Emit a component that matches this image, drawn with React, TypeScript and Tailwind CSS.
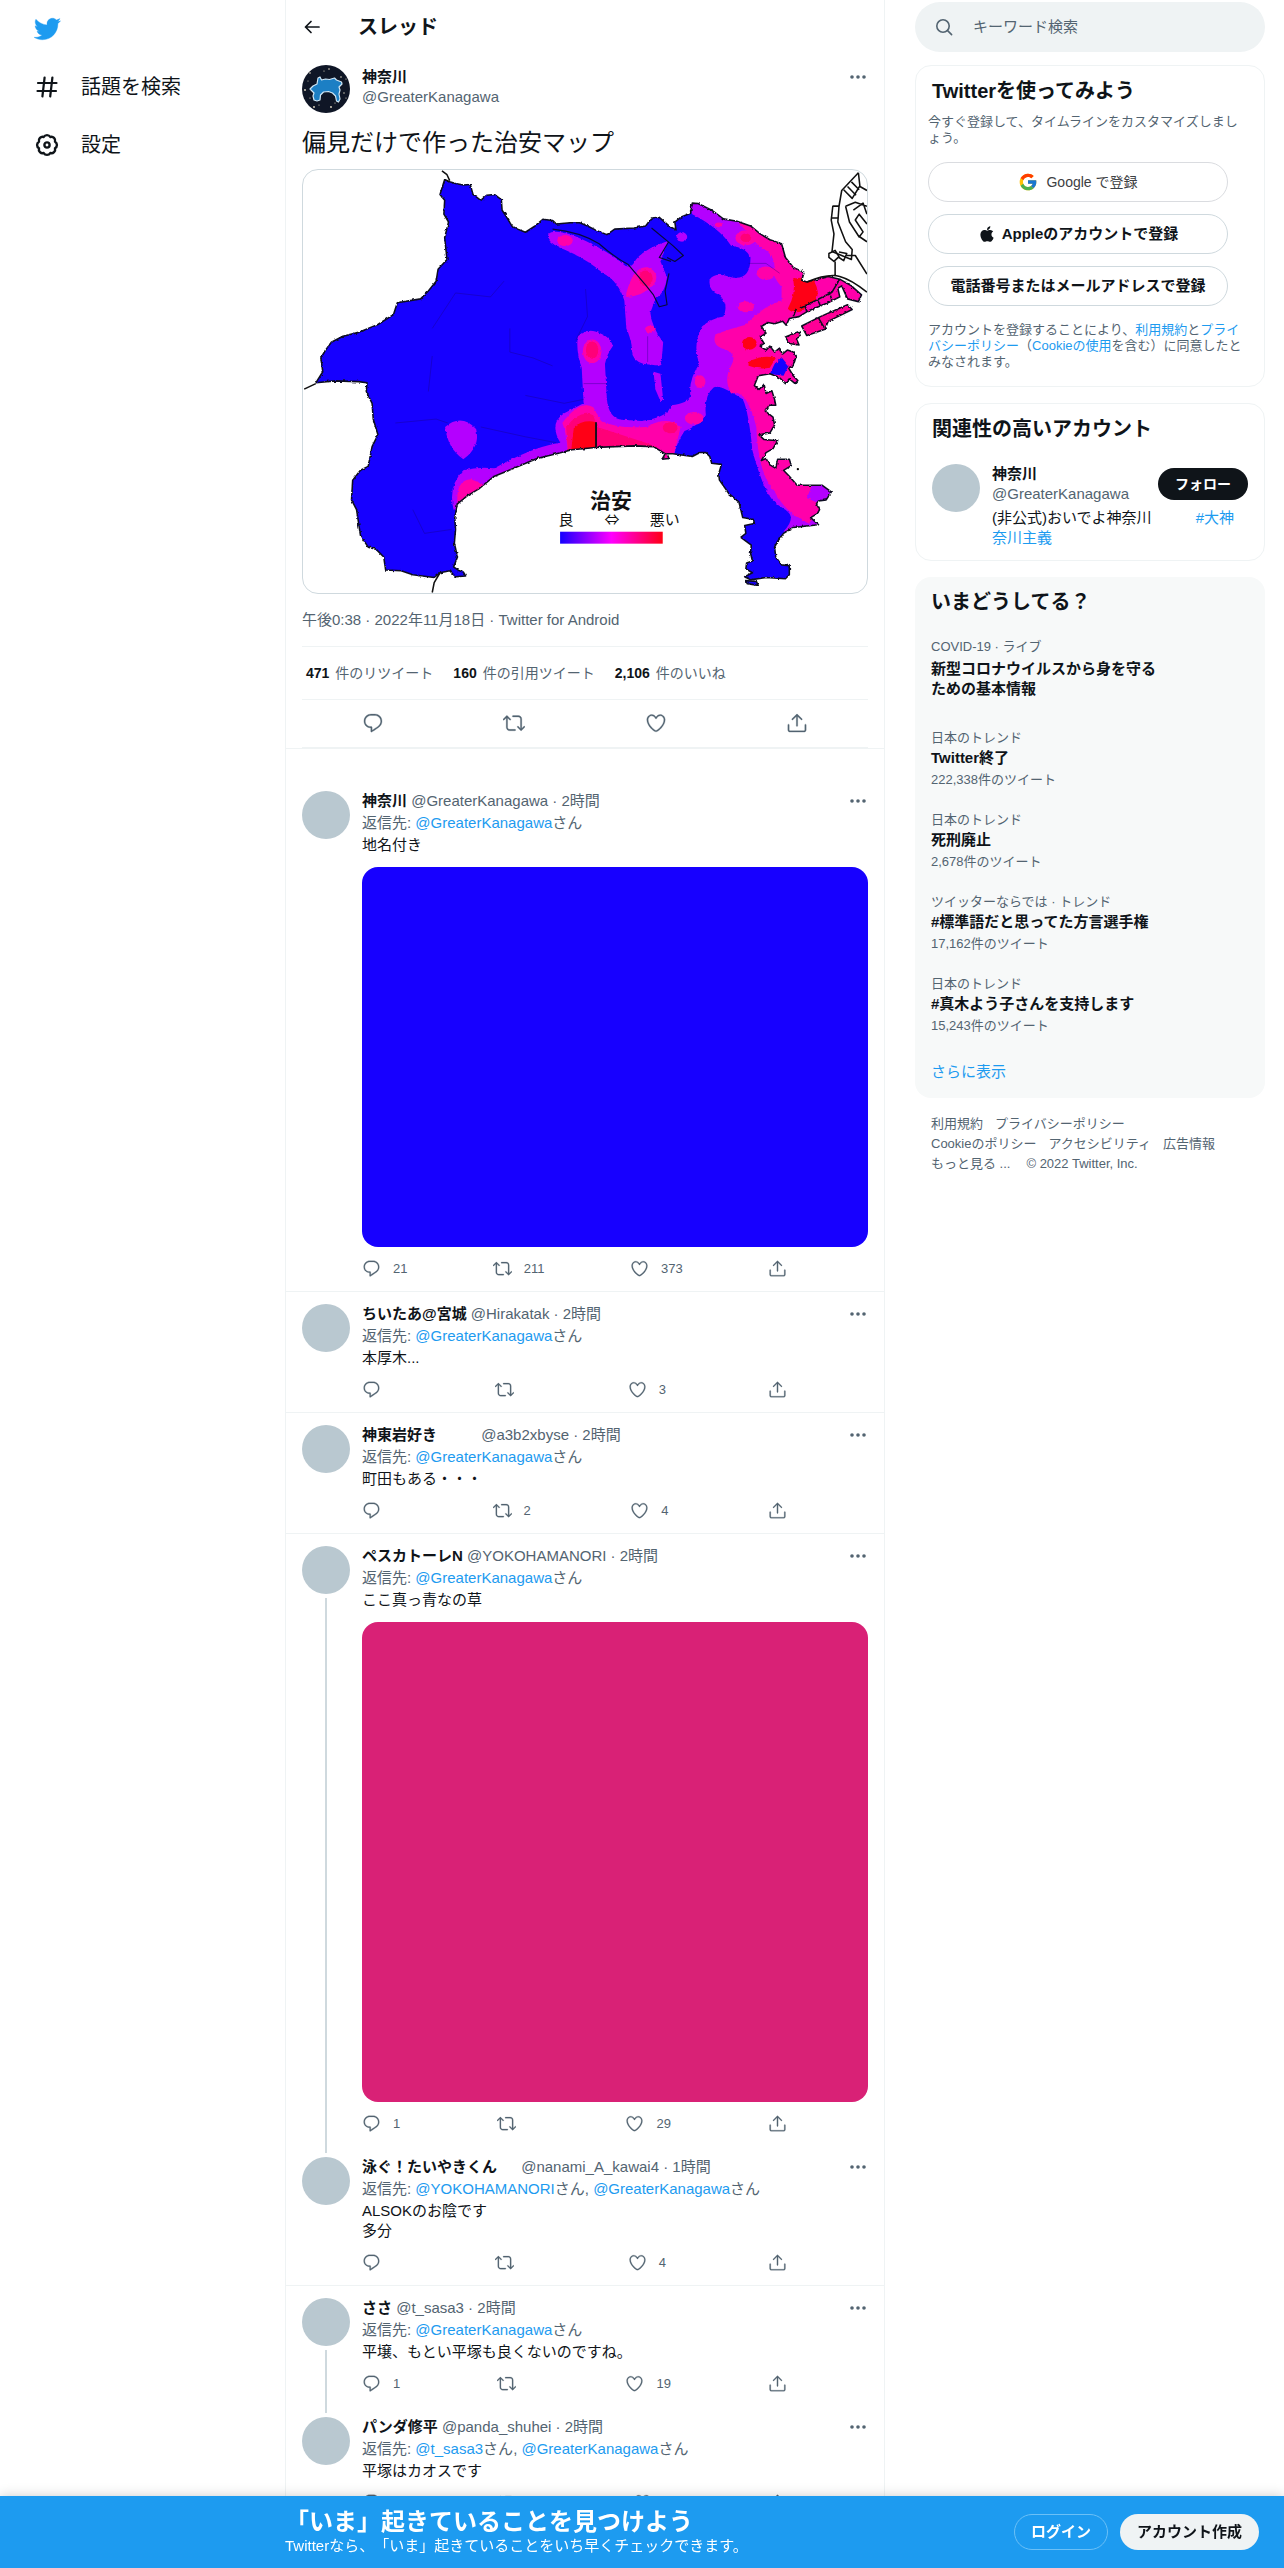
import type { ReactNode } from 'react';
import { FaApple } from 'react-icons/fa';
import { FcGoogle } from 'react-icons/fc';

type Tweet = {
  name: string;
  emoji?: number;
  handle: string;
  time: string;
  replyTo: string[];
  lines: string[];
  media?: 'blue' | 'pink';
  replies?: string;
  retweets?: string;
  likes?: string;
  linked?: boolean;
};

const tweets: Tweet[] = [
  {
    name: '神奈川',
    handle: '@GreaterKanagawa',
    time: '2時間',
    replyTo: ['@GreaterKanagawa'],
    lines: ['地名付き'],
    media: 'blue',
    replies: '21',
    retweets: '211',
    likes: '373',
  },
  {
    name: 'ちいたあ@宮城',
    handle: '@Hirakatak',
    time: '2時間',
    replyTo: ['@GreaterKanagawa'],
    lines: ['本厚木...'],
    likes: '3',
  },
  {
    name: '神東岩好き',
    emoji: 2,
    handle: '@a3b2xbyse',
    time: '2時間',
    replyTo: ['@GreaterKanagawa'],
    lines: ['町田もある・・・'],
    retweets: '2',
    likes: '4',
  },
  {
    name: 'ペスカトーレN',
    handle: '@YOKOHAMANORI',
    time: '2時間',
    replyTo: ['@GreaterKanagawa'],
    lines: ['ここ真っ青なの草'],
    media: 'pink',
    replies: '1',
    likes: '29',
    linked: true,
  },
  {
    name: '泳ぐ！たいやきくん',
    emoji: 1,
    handle: '@nanami_A_kawai4',
    time: '1時間',
    replyTo: ['@YOKOHAMANORI', '@GreaterKanagawa'],
    lines: ['ALSOKのお陰です', '多分'],
    likes: '4',
  },
  {
    name: 'ささ',
    handle: '@t_sasa3',
    time: '2時間',
    replyTo: ['@GreaterKanagawa'],
    lines: ['平壌、もとい平塚も良くないのですね。'],
    replies: '1',
    likes: '19',
    linked: true,
  },
  {
    name: 'パンダ修平',
    handle: '@panda_shuhei',
    time: '2時間',
    replyTo: ['@t_sasa3', '@GreaterKanagawa'],
    lines: ['平塚はカオスです'],
  },
];

const trends = [
  { label: '日本のトレンド', title: 'Twitter終了', count: '222,338件のツイート' },
  { label: '日本のトレンド', title: '死刑廃止', count: '2,678件のツイート' },
  { label: 'ツイッターならでは · トレンド', title: '#標準語だと思ってた方言選手権', count: '17,162件のツイート' },
  { label: '日本のトレンド', title: '#真木よう子さんを支持します', count: '15,243件のツイート' },
];

const paths = {
  bird: 'M23.643 4.937c-.835.37-1.732.62-2.675.733.962-.576 1.7-1.49 2.048-2.578-.9.534-1.897.922-2.958 1.13-.85-.904-2.06-1.47-3.4-1.47-2.572 0-4.658 2.086-4.658 4.66 0 .364.042.718.12 1.06-3.873-.195-7.304-2.05-9.602-4.868-.4.69-.63 1.49-.63 2.342 0 1.616.823 3.043 2.072 3.878-.764-.025-1.482-.234-2.11-.583v.06c0 2.257 1.605 4.14 3.737 4.568-.392.106-.803.162-1.227.162-.3 0-.593-.028-.877-.082.593 1.85 2.313 3.198 4.352 3.234-1.595 1.25-3.604 1.995-5.786 1.995-.376 0-.747-.022-1.112-.065 2.062 1.323 4.51 2.093 7.14 2.093 8.57 0 13.255-7.098 13.255-13.254 0-.2-.005-.402-.014-.602.91-.658 1.7-1.477 2.323-2.41z',
  reply: 'M14.046 2.242l-4.148-.01h-.002c-4.374 0-7.8 3.427-7.8 7.802 0 4.098 3.186 7.206 7.465 7.37v3.828c0 .108.044.286.12.403.142.225.384.347.632.347.138 0 .277-.038.402-.118.264-.168 6.473-4.14 8.088-5.506 1.902-1.61 3.04-3.97 3.043-6.312v-.017c-.006-4.367-3.43-7.787-7.8-7.788zm3.787 12.972c-1.134.96-4.862 3.405-6.772 4.643V16.67c0-.414-.335-.75-.75-.75h-.396c-3.66 0-6.318-2.476-6.318-5.886 0-3.534 2.768-6.302 6.3-6.302l4.147.01h.002c3.532 0 6.3 2.766 6.302 6.296-.003 1.91-.942 3.844-2.514 5.176z',
  retweet: 'M23.77 15.67c-.292-.293-.767-.293-1.06 0l-2.22 2.22V7.65c0-2.068-1.683-3.75-3.75-3.75h-5.85c-.414 0-.75.336-.75.75s.336.75.75.75h5.85c1.24 0 2.25 1.01 2.25 2.25v10.24l-2.22-2.22c-.293-.293-.768-.293-1.06 0s-.294.768 0 1.06l3.5 3.5c.145.147.337.22.53.22s.383-.072.53-.22l3.5-3.5c.294-.292.294-.767 0-1.06zm-10.66 3.28H7.26c-1.24 0-2.25-1.01-2.25-2.25V6.46l2.22 2.22c.148.147.34.22.532.22s.384-.073.53-.22c.293-.293.293-.768 0-1.06l-3.5-3.5c-.293-.294-.768-.294-1.06 0l-3.5 3.5c-.294.292-.294.767 0 1.06s.767.293 1.06 0l2.22-2.22V16.7c0 2.068 1.683 3.75 3.75 3.75h5.85c.414 0 .75-.336.75-.75s-.337-.75-.75-.75z',
  like: 'M12 21.638h-.014C9.403 21.59 1.95 14.856 1.95 8.478c0-3.064 2.525-5.754 5.403-5.754 2.29 0 3.83 1.58 4.646 2.73.814-1.148 2.354-2.73 4.645-2.73 2.88 0 5.404 2.69 5.404 5.755 0 6.376-7.454 13.11-10.037 13.157H12zM7.354 4.225c-2.08 0-3.903 1.988-3.903 4.255 0 5.74 7.034 11.596 8.55 11.658 1.518-.062 8.55-5.917 8.55-11.658 0-2.267-1.823-4.255-3.903-4.255-2.528 0-3.94 2.936-3.952 2.965-.23.562-1.156.562-1.387 0-.014-.03-1.425-2.965-3.954-2.965z',
  share: 'M17.53 7.47l-5-5c-.293-.293-.768-.293-1.06 0l-5 5c-.294.293-.294.768 0 1.06s.767.294 1.06 0l3.72-3.72V15c0 .414.336.75.75.75s.75-.336.75-.75V4.81l3.72 3.72c.146.147.338.22.53.22s.384-.072.53-.22c.293-.293.293-.767 0-1.06zM19.708 21.944H4.292C3.028 21.944 2 20.916 2 19.652V14c0-.414.336-.75.75-.75s.75.336.75.75v5.652c0 .437.355.792.792.792h15.416c.437 0 .792-.355.792-.792V14c0-.414.336-.75.75-.75s.75.336.75.75v5.652c0 1.264-1.028 2.292-2.292 2.292z',
};

function Icon({ name, className }: { name: keyof typeof paths; className: string }) {
  return (
    <svg
      viewBox="0 0 24 24"
      fill="currentColor"
      stroke="currentColor"
      strokeWidth="0.3"
      className={`shrink-0 ${className}`}
      aria-hidden="true"
    >
      <path d={paths[name]} />
    </svg>
  );
}

function MoreButton() {
  return (
    <button type="button" aria-label="もっと見る" className="text-[#536471]">
      <svg viewBox="0 0 20 20" fill="currentColor" className="size-5">
        <circle cx="4" cy="10" r="1.8" />
        <circle cx="10" cy="10" r="1.8" />
        <circle cx="16" cy="10" r="1.8" />
      </svg>
    </button>
  );
}

/* Blank slots that stand where emoji go */
function EmojiGap({ count }: { count: number }) {
  return (
    <>
      {Array.from({ length: count }, (_, i) => (
        <span key={i} className="inline-block w-5" />
      ))}
    </>
  );
}

function Link({ children }: { children: ReactNode }) {
  return (
    <a href="#" className="text-[#1d9bf0]">
      {children}
    </a>
  );
}

const LAND =
  'M412 452L425 458 440 462 460 466 478 465 485 490 505 505 520 492 540 490 558 503 560 530 572 548 585 570 600 578 620 586 645 570 665 553 690 556 700 565 735 562 760 562 780 570 800 580 830 592 850 578 900 575 930 570 945 550 965 548 990 570 1008 580 1005 560 1020 548 1045 538 1050 512 1065 513 1100 530 1130 552 1165 558 1200 570 1225 590 1250 605 1280 615 1290 650 1310 675 1338 688 1332 708 1345 712 1400 698 1430 705 1460 722 1486 745 1478 762 1450 755 1435 722 1425 728 1430 750 1400 765 1350 785 1325 800 1300 805 1292 822 1283 812 1262 818 1245 815 1228 825 1240 842 1225 852 1235 868 1225 875 1240 885 1250 875 1262 890 1275 880 1282 895 1295 885 1310 890 1318 900 1310 925 1298 930 1310 950 1322 962 1315 970 1300 958 1290 970 1275 955 1250 945 1220 950 1210 975 1222 985 1235 972 1240 995 1255 988 1262 1010 1265 1025 1248 1025 1238 1040 1258 1055 1262 1075 1250 1095 1222 1100 1235 1112 1270 1115 1258 1135 1240 1145 1228 1165 1240 1160 1248 1175 1265 1185 1270 1162 1300 1162 1305 1178 1285 1190 1300 1205 1320 1228 1385 1228 1408 1245 1395 1265 1375 1268 1370 1275 1378 1290 1372 1300 1355 1310 1375 1328 1310 1335 1285 1350 1270 1370 1262 1385 1265 1410 1280 1430 1300 1432 1300 1455 1290 1465 1240 1462 1200 1468 1185 1460 1205 1450 1188 1440 1190 1425 1205 1420 1200 1400 1202 1380 1175 1360 1188 1350 1185 1330 1210 1325 1208 1315 1180 1310 1170 1270 1145 1250 1120 1215 1118 1200 1125 1175 1100 1172 1095 1155 1085 1145 1070 1145 1050 1155 1000 1148 985 1148 990 1160 972 1162 980 1148 950 1130 900 1128 850 1130 800 1132 740 1138 700 1148 650 1160 590 1185 540 1205 500 1237 470 1255 445 1275 438 1310 440 1340 437 1375 445 1410 435 1435 450 1445 460 1448 466 1458 440 1460 425 1445 400 1450 385 1462 330 1455 300 1445 260 1443 255 1410 235 1390 215 1385 195 1355 185 1290 172 1265 175 1215 195 1190 215 1180 225 1130 240 1100 228 1060 225 1020 210 990 212 968 190 965 130 963 80 968 98 940 93 905 105 885 120 865 150 850 190 840 240 820 280 795 290 765 350 755 370 735 390 710 395 680 418 655 412 600 422 560 410 540 412 505 400 490Z';

function SafetyMap() {
  return (
    <svg viewBox="0 0 566 424" className="block w-full" role="img" aria-label="神奈川県の治安マップ">
      <defs>
        <clipPath id="land">
          <path d={LAND} />
        </clipPath>
        <filter id="coast" x="0" y="0" width="1" height="1">
          <feTurbulence type="fractalNoise" baseFrequency="0.12" numOctaves="2" seed="4" />
          <feDisplacementMap in="SourceGraphic" scale="7" xChannelSelector="R" yChannelSelector="G" />
        </filter>
        <linearGradient id="scale">
          <stop offset="0" stopColor="#1400ff" />
          <stop offset="0.5" stopColor="#ff00ff" />
          <stop offset="1" stopColor="#ff0014" />
        </linearGradient>
      </defs>
      <g transform="scale(.3895 .3955) translate(-47 -428)" strokeLinejoin="round">
        <g filter="url(#coast)">
          <path d={LAND} fill="#1400ff" />
          <g clipPath="url(#land)">
            <g fill="#b400ff">
              <path d="M680 590Q690 578 740 592Q830 630 870 665Q890 685 905 655Q930 625 988 608L968 660 985 700Q980 740 955 755L942 790Q945 825 975 865L970 925 925 920Q890 910 895 880Q890 850 880 830L875 760Q860 710 820 690Q780 655 720 630Q670 610 680 590Z" />
              <path d="M950 940L968 945 975 1010 968 1015 955 985Z" />
              <path d="M755 850Q780 830 800 838Q840 850 845 875Q830 895 825 920L830 1010Q835 1060 870 1062L920 1065Q990 1055 995 1025Q1040 1020 1045 1000Q1040 960 1068 920Q1050 870 1075 825Q1100 805 1130 800Q1145 770 1120 745Q1090 735 1095 705Q1110 685 1150 700Q1200 710 1200 650Q1190 625 1150 620Q1120 575 1050 540L1040 500 1500 490 1500 1350 1285 1345Q1320 1310 1290 1290Q1250 1270 1235 1230Q1215 1180 1205 1140Q1195 1040 1180 1010Q1120 970 1105 980Q1080 1000 1085 1050Q1060 1080 1030 1090Q1010 1120 1005 1145L960 1180 500 1300 435 1290Q420 1230 460 1190Q500 1180 540 1185Q640 1130 710 1120Q680 1070 720 1045L770 1020 765 930Q750 890 755 850Z" />
              <path d="M413 1080Q455 1045 493 1085Q505 1130 460 1162Q420 1135 413 1080Z" />
              <ellipse cx="1023" cy="598" rx="14" ry="12" />
            </g>
            <g fill="#ff00aa">
              <path d="M1150 545L1500 550 1500 1215 1360 1225 1345 1260 1390 1280 1350 1325Q1290 1300 1260 1240Q1220 1200 1215 1080Q1190 980 1150 995Q1130 960 1150 925Q1170 890 1125 880Q1100 870 1110 845Q1150 830 1190 820Q1220 780 1280 760V725Q1250 690 1262 680Q1265 640 1220 620Q1180 570 1150 545Z" />
              <ellipse cx="1188" cy="600" rx="27" ry="19" />
              <ellipse cx="1240" cy="690" rx="24" ry="17" />
              <ellipse cx="1188" cy="775" rx="21" ry="14" />
              <ellipse cx="1070" cy="965" rx="14" ry="16" />
              <ellipse cx="722" cy="607" rx="20" ry="14" />
              <path d="M880 740Q900 670 935 675Q970 690 950 720Q920 750 880 750Z" />
              <ellipse cx="942" cy="832" rx="14" ry="9" />
              <ellipse cx="792" cy="888" rx="24" ry="30" />
              <ellipse cx="1055" cy="1058" rx="24" ry="16" />
              <ellipse cx="1118" cy="567" rx="9" ry="6" />
              <path d="M715 1070Q760 1010 795 1030L815 1065Q860 1085 930 1080Q990 1050 1020 1080L1000 1160 730 1150Q725 1090 715 1070Z" />
              <path d="M445 1275Q440 1215 480 1213L510 1225 490 1260Z" />
            </g>
            <g fill="#ff0078">
              <ellipse cx="792" cy="885" rx="16" ry="22" />
              <ellipse cx="930" cy="703" rx="18" ry="20" />
              <ellipse cx="993" cy="1082" rx="19" ry="14" />
              <ellipse cx="1188" cy="600" rx="14" ry="11" />
              <path d="M725 1080Q760 1035 795 1050L805 1080Q900 1110 960 1130L950 1150 730 1150Z" />
            </g>
            <g fill="#ff0014">
              <path d="M745 1080Q770 1060 802 1068V1140H738Z" />
              <path d="M1310 705Q1340 695 1365 712Q1380 740 1368 758Q1345 770 1335 785Q1310 795 1296 780Q1318 740 1310 705Z" />
              <ellipse cx="1197" cy="868" rx="19" ry="16" />
              <path d="M1195 915Q1230 895 1265 905L1250 930Q1220 935 1195 925Z" />
            </g>
            <path d="M1262 920L1280 903 1298 925 1285 950 1250 945Z" fill="#1400ff" />
          </g>
          <path d={LAND} fill="none" stroke="#101020" strokeWidth="4" />
          <g fill="#ff0096" stroke="#101020" strokeWidth="4">
            <path d="M1332 824L1380 800 1450 770 1462 782 1400 812 1392 832 1345 848Z" />
            <path d="M1290 852L1325 838 1328 850 1318 856 1325 872 1300 868Z" />
            <path d="M1375 803L1390 828M1310 800L1318 780M1345 788L1340 770M1380 772L1372 756M1410 760L1404 740M1430 705L1410 738 1330 778" fill="none" />
          </g>
          <path d="M1187 1470L1215 1472 1220 1482 1192 1478Z" fill="#1400ff" stroke="#101020" strokeWidth="4" />
        </g>
        <g fill="none" stroke="#08083c" strokeWidth="3">
          <path d="M690 578Q760 585 810 615Q850 650 885 668L930 720 950 745 965 775 985 770 980 735 990 690M945 575L1000 620 1027 645 1005 660 985 650M988 612L965 650 995 660" />
          <path d="M802 1068V1132" stroke="#101020" strokeWidth="5" />
        </g>
        <g fill="none" stroke="#1a0078" strokeWidth="1.5" opacity="0.6">
          <path d="M565 710L530 750 440 740 380 830M580 830V890L640 905 690 925M380 900L370 990M285 1070L390 1060 420 1070M620 1000L720 1020 770 1010M775 730L780 800 750 860M330 1290L360 1350 430 1340M505 1080L620 1105 700 1120M1195 665L1240 665 1275 690M935 850V915M770 970H830" />
        </g>
        <g fill="none" stroke="#111" strokeWidth="4">
          <path d="M405 430L418 440 425 455M50 984L80 970M400 1450L385 1475 380 1500" />
          <path d="M1345 712Q1400 690 1430 698T1500 738M1418 695V660M1478 435L1435 480 1428 520 1412 520 1408 555 1415 590 1410 635 1460 655 1462 630 1445 610 1425 560 1428 520" />
          <path d="M1478 435L1482 470 1500 480M1440 478L1462 500 1482 468M1450 470L1472 492M1460 458L1480 478M1445 520L1470 510 1500 520M1445 520L1455 560 1480 598 1490 585 1470 555 1480 540 1500 565M1465 530L1490 512 1500 540M1482 598L1500 610M1402 640L1418 632 1428 648 1415 660 1402 650ZM1428 636L1448 640 1440 658 1428 650M1448 645H1470L1500 692M1412 520H1428M1410 550H1426" />
        </g>
        <circle cx="1322" cy="1187" r="3" />
      </g>
      <rect x="258" y="363" width="103" height="12" fill="url(#scale)" />
      <g className="font-['Noto_Sans_CJK_JP',sans-serif]" textAnchor="middle" fill="#111">
        <text x="309" y="339" className="text-[21px] font-bold">
          治安
        </text>
        <text x="264" y="356" className="text-[15px]">
          良
        </text>
        <text x="310" y="356" className="text-[15px]">
          ⇔
        </text>
        <text x="363" y="356" className="text-[15px]">
          悪い
        </text>
      </g>
    </svg>
  );
}

function KanagawaAvatar() {
  return (
    <svg viewBox="0 0 48 48" className="size-12 shrink-0 rounded-full bg-[#0f1626]" aria-hidden="true">
      <path
        d="M16 13l2-1 1.500 3 4-1 4 .5 5-1.500 2 2 5 2 .5 2-3 3 1 3-1 4 1 5-1.500 3-2-1-1-5-3-3-4-1.500-5 .5-3 3-.5 5-3 1-3-1-1-4 1-3-4-4 3-3 4-2z"
        fill="#1c7fc4"
        stroke="#cfe6f5"
        strokeWidth="1.2"
        strokeLinejoin="round"
      />
      <g fill="#e9dfc8">
        <circle cx="8" cy="8" r=".8" />
        <circle cx="27" cy="4" r=".8" />
        <circle cx="22" cy="6" r=".6" />
        <circle cx="39" cy="12" r=".8" />
        <circle cx="44" cy="14" r=".6" />
        <circle cx="3" cy="25" r=".9" />
        <circle cx="42" cy="28" r=".7" />
        <circle cx="44" cy="33" r=".6" />
        <circle cx="8" cy="33" r=".6" />
        <circle cx="12" cy="42" r=".9" />
        <circle cx="17" cy="40" r=".6" />
        <circle cx="29" cy="42" r=".9" />
        <circle cx="33" cy="38" r=".6" />
        <circle cx="6" cy="16" r=".5" />
      </g>
    </svg>
  );
}

function Action({ icon, label, count }: { icon: 'reply' | 'retweet' | 'like'; label: string; count?: string }) {
  return (
    <button type="button" aria-label={label} className="flex items-center">
      <Icon name={icon} className="size-[19px]" />
      <span className="px-3 text-[13px]">{count}</span>
    </button>
  );
}

function TweetRow({ tweet, afterLinked }: { tweet: Tweet; afterLinked: boolean }) {
  return (
    <article className={`flex gap-3 px-4 ${tweet.linked ? '' : 'border-b border-[#eff3f4]'}`}>
      <div className={`flex w-12 shrink-0 flex-col items-center gap-1 ${afterLinked ? 'pt-[11px]' : 'pt-3'}`}>
        <div className="size-12 shrink-0 rounded-full bg-[#b9c8d0]" />
        {tweet.linked && <div className="mb-[-7px] w-0.5 grow bg-[#cfd9de]" />}
      </div>
      <div className={`min-w-0 grow pb-3 text-[15px] leading-5 ${afterLinked ? 'pt-[11px]' : 'pt-3'}`}>
        <div className="flex justify-between text-[#536471]">
          <p>
            <b className="text-[#0f1419]">{tweet.name}</b>
            <EmojiGap count={tweet.emoji ?? 0} /> {tweet.handle} · {tweet.time}
          </p>
          <MoreButton />
        </div>
        <p className="mt-0.5 text-[#536471]">
          返信先:{' '}
          {tweet.replyTo.map((to, i) => (
            <span key={to}>
              {i > 0 && ', '}
              <Link>{to}</Link>さん
            </span>
          ))}
        </p>
        <div className="mt-0.5 text-[#0f1419]">
          {tweet.lines.map((line) => (
            <p key={line}>{line}</p>
          ))}
        </div>
        {tweet.media === 'blue' && <div className="mt-3 h-[380px] rounded-2xl bg-[#1700ff]" />}
        {tweet.media === 'pink' && <div className="mt-3 h-[480px] rounded-2xl bg-[#d92176]" />}
        <div className="mt-3 flex h-5 max-w-[425px] items-center justify-between text-[#536471]">
          <Action icon="reply" label="返信" count={tweet.replies} />
          <Action icon="retweet" label="リツイート" count={tweet.retweets} />
          <Action icon="like" label="いいね" count={tweet.likes} />
          <button type="button" aria-label="共有">
            <Icon name="share" className="size-[19px]" />
          </button>
        </div>
      </div>
    </article>
  );
}

function LeftNav() {
  return (
    <header className="flex min-w-[200px] grow flex-col pl-[33px] text-xl text-[#0f1419]">
      <a href="#" aria-label="Twitter" className="flex h-[58px] items-center text-[#1d9bf0]">
        <Icon name="bird" className="size-7" />
      </a>
      <nav>
        <a href="#" className="flex h-[58px] items-center gap-5">
          <svg viewBox="0 0 28 28" className="size-7" fill="none" stroke="currentColor" strokeWidth="2.2" strokeLinecap="round">
            <path d="M11.600 4.500L9.400 23.500M19.400 4.500L17.200 23.500M5 10h18.500M4.500 18h18.500" />
          </svg>
          <span>話題を検索</span>
        </a>
        <a href="#" className="flex h-[58px] items-center gap-5">
          <svg viewBox="0 0 28 28" className="size-7" fill="none" stroke="currentColor" strokeWidth="2.4" strokeLinejoin="round">
            <circle cx="14" cy="14" r="2.600" />
            <path d="M22 17.300A3.800 3.800 0 0 1 17.300 22A3.800 3.800 0 0 1 10.700 22A3.800 3.800 0 0 1 6 17.300A3.800 3.800 0 0 1 6 10.700A3.800 3.800 0 0 1 10.700 6A3.800 3.800 0 0 1 17.300 6A3.800 3.800 0 0 1 22 10.700A3.800 3.800 0 0 1 22 17.300Z" />
          </svg>
          <span>設定</span>
        </a>
      </nav>
    </header>
  );
}

function MainTweet() {
  return (
    <article className="px-4 pt-3 text-[#536471]">
      <div className="flex items-start gap-3">
        <KanagawaAvatar />
        <div className="flex grow items-start justify-between pt-0.5 text-[15px] leading-5">
          <div>
            <p className="font-bold text-[#0f1419]">神奈川</p>
            <p>@GreaterKanagawa</p>
          </div>
          <MoreButton />
        </div>
      </div>
      <p className="mt-4 text-2xl leading-7 text-[#0f1419]">偏見だけで作った治安マップ</p>
      <div className="mt-3 overflow-hidden rounded-2xl border border-[#cfd9de]">
        <SafetyMap />
      </div>
      <p className="my-4 text-[15px] leading-5">午後0:38 · 2022年11月18日 · Twitter for Android</p>
      <div className="flex gap-5 border-y border-[#eff3f4] px-1 py-4 text-sm leading-5">
        <p className="flex gap-1.5">
          <b className="text-[#0f1419]">471</b>
          <span>件のリツイート</span>
        </p>
        <p className="flex gap-1.5">
          <b className="text-[#0f1419]">160</b>
          <span>件の引用ツイート</span>
        </p>
        <p className="flex gap-1.5">
          <b className="text-[#0f1419]">2,106</b>
          <span>件のいいね</span>
        </p>
      </div>
      <div className="flex h-12 items-center justify-around border-b border-[#eff3f4]">
        <button type="button" aria-label="返信">
          <Icon name="reply" className="size-[22px]" />
        </button>
        <button type="button" aria-label="リツイート">
          <Icon name="retweet" className="size-[22px]" />
        </button>
        <button type="button" aria-label="いいね">
          <Icon name="like" className="size-[22px]" />
        </button>
        <button type="button" aria-label="共有">
          <Icon name="share" className="size-[22px]" />
        </button>
      </div>
    </article>
  );
}

function Sidebar() {
  return (
    <aside className="mr-[19px] ml-[30px] w-[350px] shrink-0 text-[15px] leading-5 text-[#0f1419]">
      <label className="mt-0.5 flex h-[50px] items-center gap-5 rounded-full bg-[#eff3f4] pl-5">
        <svg viewBox="0 0 18 18" className="size-[18px]" fill="none" stroke="#536471" strokeWidth="1.6" strokeLinecap="round">
          <circle cx="8" cy="8" r="6.200" />
          <path d="M12.600 12.600L16.600 16.600" />
        </svg>
        <input
          type="search"
          aria-label="キーワード検索"
          placeholder="キーワード検索"
          className="grow bg-transparent outline-none placeholder:text-[#536471]"
        />
      </label>

      <section className="mt-[13px] rounded-2xl border border-[#eff3f4] px-3 pb-4">
        <h2 className="px-1 pt-3 pb-2.5 text-xl leading-[26px] font-bold">Twitterを使ってみよう</h2>
        <p className="pr-2 text-[13px] leading-4 break-all text-[#536471] [line-break:anywhere]">
          今すぐ登録して、タイムラインをカスタマイズしましょう。
        </p>
        <div className="mt-4 flex w-[300px] flex-col gap-3">
          <button type="button" className="flex h-10 items-center justify-center gap-2 rounded-full border border-[#dadce0] text-sm text-[#3c4043]">
            <FcGoogle className="size-5" />
            Google で登録
          </button>
          <button type="button" className="flex h-10 items-center justify-center gap-1.5 rounded-full border border-[#cfd9de] font-bold">
            <FaApple className="size-[18px]" />
            Appleのアカウントで登録
          </button>
          <button type="button" className="h-10 rounded-full border border-[#cfd9de] font-bold">
            電話番号またはメールアドレスで登録
          </button>
        </div>
        <p className="mt-4 pr-2 text-[13px] leading-4 break-all text-[#536471]">
          アカウントを登録することにより、<Link>利用規約</Link>と<Link>プライバシーポリシー</Link>（<Link>Cookieの使用</Link>
          を含む）に同意したとみなされます。
        </p>
      </section>

      <section className="mt-4 rounded-2xl border border-[#eff3f4] px-4 pb-3">
        <h2 className="pt-3 pb-2.5 text-xl leading-[26px] font-bold">関連性の高いアカウント</h2>
        <div className="flex gap-3 pt-3">
          <div className="size-12 shrink-0 rounded-full bg-[#b9c8d0]" />
          <div className="grow">
            <div className="flex items-center justify-between">
              <div>
                <p className="font-bold">神奈川</p>
                <p className="text-[#536471]">@GreaterKanagawa</p>
              </div>
              <button type="button" className="h-8 rounded-full bg-[#0f1419] px-[17px] text-sm font-bold text-white">
                フォロー
              </button>
            </div>
            <p className="pt-1">
              (非公式)おいでよ神奈川
              <EmojiGap count={2} /> <Link>#大神奈川主義</Link>
            </p>
          </div>
        </div>
      </section>

      <section className="mt-4 rounded-2xl bg-[#f7f9f9] px-4">
        <h2 className="pt-3 pb-2.5 text-xl leading-[26px] font-bold">いまどうしてる？</h2>
        <div className="pt-3.5 pb-[19px]">
          <p className="text-[13px] leading-4 text-[#536471]">COVID-19 · ライブ</p>
          <p className="mt-1 w-[230px] font-bold">新型コロナウイルスから身を守るための基本情報</p>
        </div>
        {trends.map((trend) => (
          <div key={trend.title} className="py-3">
            <p className="text-[13px] leading-4 text-[#536471]">{trend.label}</p>
            <p className="mt-0.5 font-bold">{trend.title}</p>
            <p className="mt-1 text-[13px] leading-4 text-[#536471]">{trend.count}</p>
          </div>
        ))}
        <div className="py-4">
          <Link>さらに表示</Link>
        </div>
      </section>

      <footer className="px-4 pt-4 text-[13px] text-[#536471]">
        <div className="flex gap-3">
          <a href="#">利用規約</a>
          <a href="#">プライバシーポリシー</a>
        </div>
        <div className="flex gap-3">
          <a href="#">Cookieのポリシー</a>
          <a href="#">アクセシビリティ</a>
          <a href="#">広告情報</a>
        </div>
        <div className="flex gap-4">
          <a href="#">もっと見る ...</a>
          <span>© 2022 Twitter, Inc.</span>
        </div>
      </footer>
    </aside>
  );
}

export default function App() {
  return (
    <div className="bg-white font-['Liberation_Sans','Noto_Sans_CJK_JP',sans-serif] [text-spacing-trim:space-all]">
      <div className="flex min-h-screen">
        <LeftNav />
        <main className="w-[600px] shrink-0 border-x border-[#eff3f4] pb-18">
          <div className="flex h-[53px] items-center gap-9 px-4 text-[#0f1419]">
            <button type="button" aria-label="戻る">
              <svg viewBox="0 0 20 20" className="size-5" fill="none" stroke="currentColor" strokeWidth="1.700" strokeLinecap="round" strokeLinejoin="round">
                <path d="M17 10H3.500M9 4.500L3.500 10L9 15.500" />
              </svg>
            </button>
            <h1 className="text-xl font-bold">スレッド</h1>
          </div>
          <MainTweet />
          <div className="mb-[30px] border-b border-[#eff3f4]" />
          {tweets.map((tweet, i) => (
            <TweetRow key={tweet.handle} tweet={tweet} afterLinked={i > 0 && !!tweets[i - 1].linked} />
          ))}
        </main>
        <Sidebar />
      </div>

      <div className="fixed inset-x-0 bottom-0 flex h-18 items-center bg-[#1d9bf0] pr-[25px] pl-[285px] text-white shadow-[0_0_12px_rgba(0,0,0,0.2)]">
        <div className="grow">
          <p className="text-2xl leading-7 font-bold">「いま」起きていることを見つけよう</p>
          <p className="text-[15px] leading-5">Twitterなら、「いま」起きていることをいち早くチェックできます。</p>
        </div>
        <div className="flex gap-3 text-[15px] font-bold">
          <button type="button" className="h-9 rounded-full border border-[#6bc0f7] px-4">
            ログイン
          </button>
          <button type="button" className="h-9 rounded-full bg-[#eff3f4] px-[17px] text-[#0f1419]">
            アカウント作成
          </button>
        </div>
      </div>
    </div>
  );
}
